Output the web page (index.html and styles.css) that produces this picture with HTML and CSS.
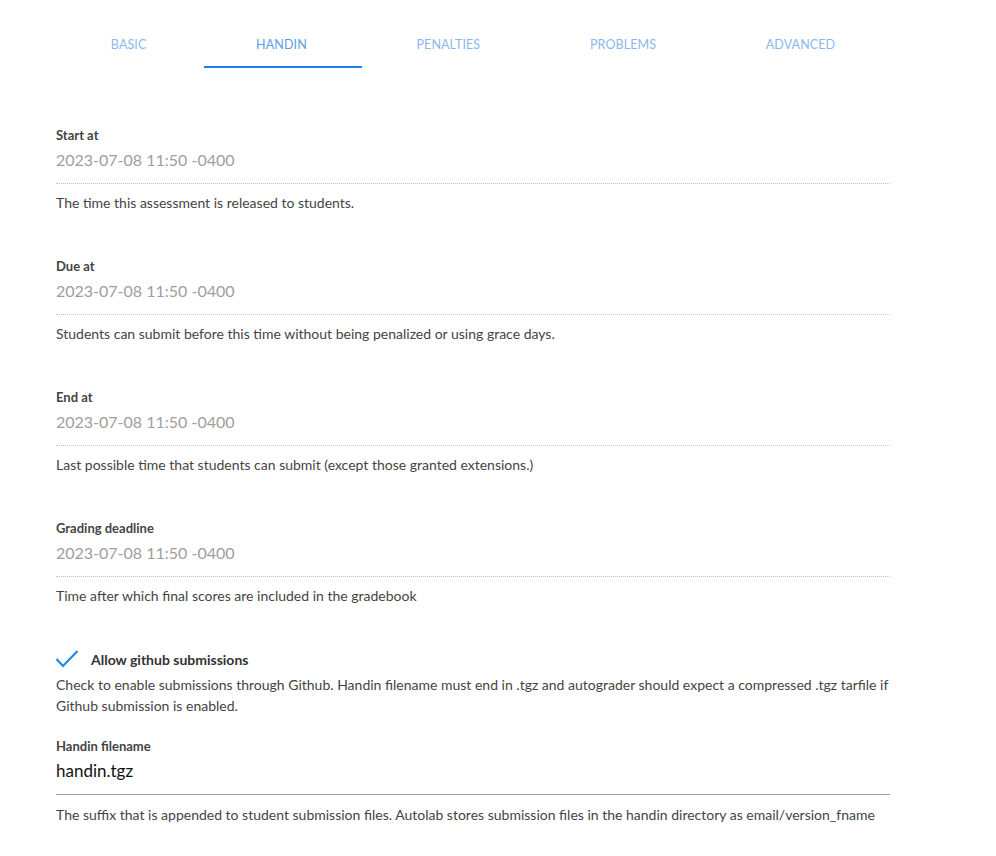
FILE: index.html
```html
<!DOCTYPE html>
<html>
<head>
<meta charset="utf-8">
<link rel="stylesheet" href="styles.css">
</head>
<body>
<div class="page">
  <ul class="tabs">
    <li class="tab"><a>Basic</a></li>
    <li class="tab active"><a>Handin</a></li>
    <li class="tab"><a>Penalties</a></li>
    <li class="tab"><a>Problems</a></li>
    <li class="tab"><a>Advanced</a></li>
  </ul>

  <div class="form">
    <div class="field">
      <label class="label">Start at</label>
      <div class="input dotted">2023-07-08 11:50 -0400</div>
      <p class="help">The time this assessment is released to students.</p>
    </div>
    <div class="field">
      <label class="label">Due at</label>
      <div class="input dotted">2023-07-08 11:50 -0400</div>
      <p class="help">Students can submit before this time without being penalized or using grace days.</p>
    </div>
    <div class="field">
      <label class="label">End at</label>
      <div class="input dotted">2023-07-08 11:50 -0400</div>
      <p class="help">Last possible time that students can submit (except those granted extensions.)</p>
    </div>
    <div class="field">
      <label class="label">Grading deadline</label>
      <div class="input dotted">2023-07-08 11:50 -0400</div>
      <p class="help">Time after which final scores are included in the gradebook</p>
    </div>

    <div class="check-field">
      <div class="check-row">
        <svg class="check" width="24" height="20" viewBox="0 0 24 20"><polyline points="1.5,10 8,17 22.5,2" fill="none" stroke="#1e88e5" stroke-width="2.2"/></svg>
        <span class="check-label">Allow github submissions</span>
      </div>
      <p class="help tight">Check to enable submissions through Github. Handin filename must end in .tgz and autograder should expect a compressed .tgz tarfile if Github submission is enabled.</p>
    </div>

    <div class="field last">
      <label class="label">Handin filename</label>
      <div class="input solid">handin.tgz</div>
      <p class="help">The suffix that is appended to student submission files. Autolab stores submission files in the handin directory as email/version_fname</p>
    </div>
  </div>
</div>
</body>
</html>
```

FILE: styles.css
```css
* { box-sizing: border-box; }
html, body { margin: 0; padding: 0; background: #fff; }
body {
  font-family: "Lato", "Liberation Sans", sans-serif;
  color: #333;
}
.page {
  width: 834px;
  margin-left: 56px;
}
.tabs {
  list-style: none;
  margin: 20px 0 0 0;
  padding: 0;
  display: flex;
  height: 48px;
}
.tab {
  flex-grow: 1;
  text-align: center;
  line-height: 49px;
  height: 48px;
  text-transform: uppercase;
  position: relative;
}
.tab a {
  display: block;
  padding: 0 24px;
  font-size: 12.5px;
  color: #8db6ef;
  letter-spacing: 0.1px;
}
.tab.active a { color: #5e9ce9; }
.tab.active::after {
  content: "";
  position: absolute;
  left: 3px; right: 0; bottom: 0;
  height: 2px;
  background: #1a80f0;
}
.form { padding-top: 59px; }
.field { height: 131px; }
.label {
  display: block;
  font-size: 13px;
  font-weight: 700;
  color: #444;
  line-height: 16px;
}
.input {
  font-size: 16px;
  line-height: 22px;
  padding: 6px 0 12px;
  color: #9e9e9e;
}
.input.dotted { border-bottom: 1px dotted #c4c4c4; }
.input.solid { color: #111; font-size: 17px; border-bottom: 1px solid #9e9e9e; padding: 6px 0 12px; }
.help {
  margin: 8px 0 0;
  font-size: 14px;
  line-height: 21px;
  color: #444;
}
.check-field { margin-top: -4px; }
.check-row {
  display: flex;
  align-items: center;
  height: 24px;
}
.check { margin-right: 12px; margin-left: -1px; }
.check-label { font-size: 14px; font-weight: 700; color: #333; }
.help.tight { margin-top: 3px; }
.field.last { margin-top: 22px; }
.field.last .help { margin-top: 9px; }
```
